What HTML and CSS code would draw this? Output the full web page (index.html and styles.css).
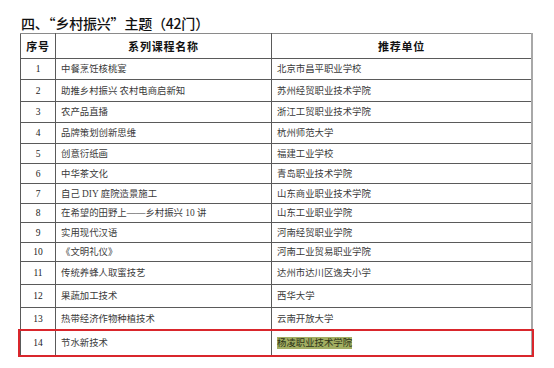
FILE: index.html
```html
<!DOCTYPE html>
<html lang="zh-CN">
<head>
<meta charset="utf-8">
<link rel="stylesheet" href="styles.css">
</head>
<body>
<h2 class="title">四、“乡村振兴”主题（42门）</h2>
<div class="wrap">
<table class="courses">
<thead>
<tr><th class="c1">序号</th><th class="c2">系列课程名称</th><th class="c3">推荐单位</th></tr>
</thead>
<tbody>
<tr><td class="num">1</td><td>中餐烹饪核桃宴</td><td>北京市昌平职业学校</td></tr>
<tr><td class="num">2</td><td>助推乡村振兴 农村电商启新知</td><td>苏州经贸职业技术学院</td></tr>
<tr><td class="num">3</td><td>农产品直播</td><td>浙江工贸职业技术学院</td></tr>
<tr><td class="num">4</td><td>品牌策划创新思维</td><td>杭州师范大学</td></tr>
<tr><td class="num">5</td><td>创意衍纸画</td><td>福建工业学校</td></tr>
<tr><td class="num">6</td><td>中华茶文化</td><td>青岛职业技术学院</td></tr>
<tr><td class="num">7</td><td>自己 DIY 庭院造景施工</td><td>山东商业职业技术学院</td></tr>
<tr><td class="num">8</td><td>在希望的田野上——乡村振兴 10 讲</td><td>山东工业职业学院</td></tr>
<tr><td class="num">9</td><td>实用现代汉语</td><td>河南经贸职业学院</td></tr>
<tr><td class="num">10</td><td>《文明礼仪》</td><td>河南工业贸易职业学院</td></tr>
<tr><td class="num">11</td><td>传统养蜂人取蜜技艺</td><td>达州市达川区逸夫小学</td></tr>
<tr><td class="num">12</td><td>果蔬加工技术</td><td>西华大学</td></tr>
<tr><td class="num">13</td><td>热带经济作物种植技术</td><td>云南开放大学</td></tr>
<tr><td class="num">14</td><td>节水新技术</td><td><span class="hl">杨凌职业技术学院</span></td></tr>
</tbody>
</table>
<div class="redbox"></div>
</div>
</body>
</html>
```

FILE: styles.css
```css
html, body {
  margin: 0;
  padding: 0;
  background: #fff;
}
body {
  width: 554px;
  height: 368px;
  overflow: hidden;
  font-family: "Liberation Serif", "Noto Sans CJK SC", serif;
  color: #3a3a3a;
}
.title {
  margin: 0;
  padding: 13px 0 0 21px;
  height: 20px;
  line-height: 20px;
  font-family: "Noto Sans CJK SC", sans-serif;
  font-size: 14px;
  font-weight: 500;
  color: #111;
  letter-spacing: -0.2px;
}
.wrap {
  position: relative;
  margin-left: 20px;
  width: 510px;
}
.courses {
  border-collapse: collapse;
  width: 509px;
  table-layout: fixed;
}
.courses th, .courses td {
  border: 1px solid #5a5a5a;
  padding: 0 0 0 5px;
  font-size: 9.4px;
  line-height: 12px;
  text-align: left;
  vertical-align: middle;
  white-space: nowrap;
  font-weight: normal;
}
.courses th {
  height: 24px;
  text-align: center;
  padding: 0;
  font-family: "Noto Sans CJK SC", sans-serif;
  font-weight: 700;
  font-size: 11px;
  letter-spacing: 0.8px;
  color: #111;
  border-top-color: #8a8a8a;
}
.courses th.c1 { width: 34px; }
.courses th.c2 { width: 215px; }
.courses th.c3 { width: 259px; }
.courses th.c3, .courses td:last-child {
  border-right: 2px solid #a8a8a8;
}
.courses td.num {
  text-align: center;
  padding: 0;
  color: #222;
  font-size: 9.5px;
}
.courses tbody tr td { height: 20px; }
.courses tbody tr:nth-child(1) td { height: 20px; }
.courses tbody tr:nth-child(2) td { height: 21px; }
.courses tbody tr:nth-child(3) td { height: 20px; }
.courses tbody tr:nth-child(4) td { height: 20px; }
.courses tbody tr:nth-child(5) td,
.courses tbody tr:nth-child(6) td,
.courses tbody tr:nth-child(7) td,
.courses tbody tr:nth-child(9) td { height: 19px; }
.courses tbody tr:nth-child(8) td,
.courses tbody tr:nth-child(10) td { height: 18px; }
.courses tbody tr:nth-child(11) td,
.courses tbody tr:nth-child(12) td,
.courses tbody tr:nth-child(13) td { height: 22px; }
.courses tbody tr:nth-child(14) td { height: 24px; }
.hl {
  background: #a2ae62;
  color: #2d3318;
  padding: 1px 0;
}
.redbox {
  position: absolute;
  left: -2px;
  top: 296px;
  width: 512px;
  height: 24px;
  border: 2px solid #d9262c;
}
```
